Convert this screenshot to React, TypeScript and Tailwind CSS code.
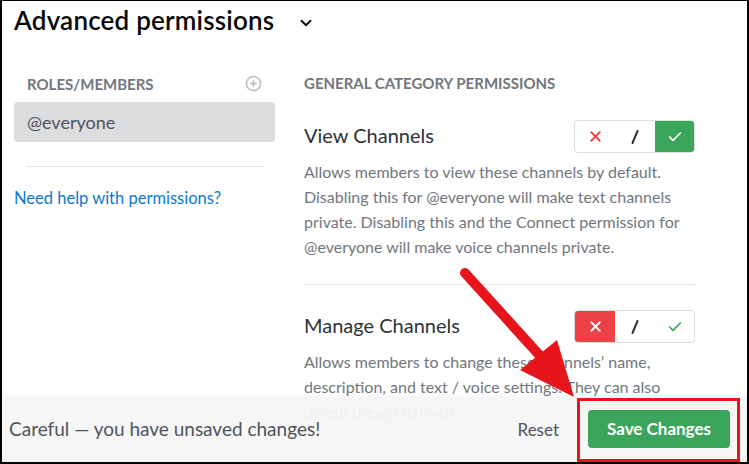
import { ChevronDown, X, Check } from "lucide-react";

// Channel category "Advanced permissions" pane, with the unsaved-changes notice and a red callout.
export default function App() {
  return (
    <div className="relative h-[464px] w-[749px] overflow-hidden border-b-2 border-l-2 border-r-2 border-t border-black bg-white font-['Lato',sans-serif]">
      <div className="flex items-center pl-3 pt-[2px]">
        <h1 className="text-[26px] font-semibold leading-[34px] tracking-[0.2px] text-[#060607]">Advanced permissions</h1>
        <ChevronDown className="ml-[23px] mt-[6px] h-[18px] w-[18px] text-[#060607]" strokeWidth={2.5} />
      </div>

      <div className="mt-[38px] flex">
        <div className="w-[273px] shrink-0 pl-3">
          <div className="flex items-center justify-between pl-[13px] pr-[13px]">
            <span className="text-[15px] font-bold uppercase leading-4 text-[#72767d]">Roles/Members</span>
            <PlusCircle />
          </div>
          <div className="mt-[10px] flex h-[40px] items-center rounded-[4px] bg-[#dcddde] pl-[13px] text-[18px] text-[#4f545c]">@everyone</div>
          <div className="mx-[12px] mt-[24px] h-px bg-[#e3e5e8]" />
          <a className="mt-[21px] block text-[16.5px] leading-5 text-[#0b79d0]">Need help with permissions?</a>
        </div>

        <div className="ml-[29px] w-[391px]">
          <div className="text-[15px] font-bold uppercase leading-4 text-[#72767d]">General Category Permissions</div>
          <div className="mt-[29px]">
            <Permission
              title="View Channels"
              state="allow"
              desc="Allows members to view these channels by default. Disabling this for @everyone will make text channels private. Disabling this and the Connect permission for @everyone will make voice channels private."
            />
          </div>
          <div className="mt-[25px] h-px bg-[#e3e5e8]" />
          <div className="mt-[25px]">
            <Permission
              title="Manage Channels"
              state="deny"
              desc="Allows members to change these channels’ name, description, and text / voice settings. They can also delete these channels."
            />
          </div>
        </div>
      </div>

      {/* unsaved changes notice */}
      <div className="absolute bottom-0 left-0 right-0 flex h-[65px] items-center bg-[#f6f6f7]/95 pl-[7px] pr-[17px] shadow-[0_-1px_4px_rgba(0,0,0,0.05)]">
        <span className="flex-1 text-[19px] text-[#4f545c]">Careful — you have unsaved changes!</span>
        <button className="mr-[29px] text-[17px] text-[#4f545c]">Reset</button>
        <button className="mt-[-2px] h-[38px] w-[142px] rounded-[4px] bg-[#3ba55c] text-[17px] font-bold text-white">Save Changes</button>
      </div>

      {/* annotation */}
      <div className="absolute bottom-0 right-[7px] h-[64px] w-[163px] border-[3px] border-[#e8141c]" />
      <svg className="absolute left-0 top-0" width="749" height="464" viewBox="0 0 749 464">
        <line x1="463" y1="272" x2="540" y2="357" stroke="#e8141c" strokeWidth="10" strokeLinecap="round" />
        <polygon points="518,369 555,339 572,396" fill="#e8141c" />
      </svg>
    </div>
  );
}

function Permission({ title, state, desc }: { title: string; state: "allow" | "deny"; desc: string }) {
  return (
    <div>
      <div className="flex items-start justify-between">
        <div className="pt-[3px] text-[20px] leading-6 text-[#2e3338]">{title}</div>
        <div className="flex h-[33px] overflow-hidden rounded-[4px] border border-[#dcddde]">
          <div className={`flex w-[40px] items-center justify-center ${state === "deny" ? "bg-[#ed4245] text-white" : "text-[#ed4245]"}`}>
            <X className="h-[17px] w-[17px]" strokeWidth={2.5} />
          </div>
          <div className="flex w-[40px] items-center justify-center">
            <svg width="10" height="16" viewBox="0 0 10 16"><line x1="7.5" y1="2" x2="2.5" y2="14" stroke="#2e3338" strokeWidth="2" strokeLinecap="round" /></svg>
          </div>
          <div className={`flex w-[39px] items-center justify-center ${state === "allow" ? "bg-[#3ba55c] text-white" : "text-[#3ba55c]"}`}>
            <Check className="h-[16px] w-[16px]" strokeWidth={2.5} />
          </div>
        </div>
      </div>
      <p className="mt-[6px] text-[16px] leading-[25px] text-[#72767d]">{desc}</p>
    </div>
  );
}

function PlusCircle() {
  return (
    <svg width="17" height="17" viewBox="0 0 18 18" className="text-[#b9bbbe]">
      <circle cx="9" cy="9" r="7.5" fill="none" stroke="currentColor" strokeWidth="1.6" />
      <path d="M9 5.5v7M5.5 9h7" stroke="currentColor" strokeWidth="1.8" />
    </svg>
  );
}
